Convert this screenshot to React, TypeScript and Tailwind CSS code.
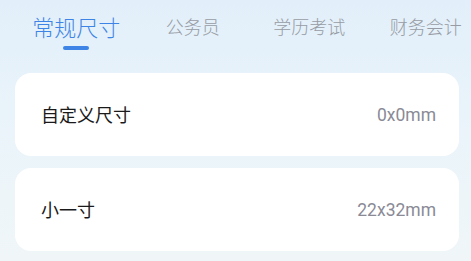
const tabs = ["常规尺寸", "公务员", "学历考试", "财务会计"];

const sizes = [
  { name: "自定义尺寸", value: "0x0mm" },
  { name: "小一寸", value: "22x32mm" },
];

export default function App() {
  return (
    <div className="w-[471px] h-[261px] overflow-hidden bg-gradient-to-b from-[#e2effa] via-[#eaf4fa] to-[#f0f6f8] font-['Noto_Sans','Noto_Sans_CJK_SC',sans-serif]">
      {/* tabs */}
      <div className="flex pl-[18px] pt-[11px]">
        {tabs.map((t, i) => (
          <div key={t} className="w-[116.5px] shrink-0 flex flex-col items-center">
            <span
              className={
                i === 0
                  ? "text-[22px] leading-[32px] font-light text-[#3d84e6]"
                  : "text-[18px] leading-[32px] font-light text-[#979ca4]"
              }
            >
              {t}
            </span>
            {i === 0 && <div className="mt-[3px] h-[4px] w-[26px] rounded-full bg-[#3d84e6]" />}
          </div>
        ))}
      </div>

      {/* list */}
      <div className="mt-[23px] ml-[15px] mr-[12px] flex flex-col gap-[12px]">
        {sizes.map((s) => (
          <div
            key={s.name}
            className="h-[83px] rounded-[16px] bg-white flex items-center justify-between pl-[26px] pr-[23px]"
          >
            <span className="text-[18px] text-[#1a1a1a] pt-[2px]">{s.name}</span>
            <span className="text-[17.5px] text-[#8a8a96] font-['Roboto',sans-serif] pt-[2px]">{s.value}</span>
          </div>
        ))}
      </div>
    </div>
  );
}
